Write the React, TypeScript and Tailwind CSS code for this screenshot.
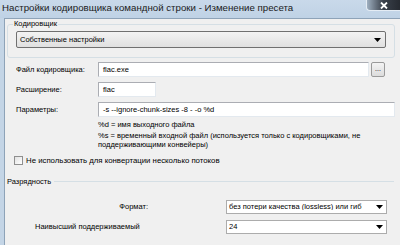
import React from 'react';

const font = { fontFamily: '"Liberation Sans", Arial, sans-serif' };

function Arrow() {
  return (
    <svg width="7" height="4" viewBox="0 0 7 4" className="shrink-0">
      <path d="M0 0h7L3.5 4z" fill="#000" />
    </svg>
  );
}

function TextBox({ value, className }: { value: string; className: string }) {
  return (
    <div
      className={`h-[15px] bg-white border border-[#abadb3] border-r-[#e3e9ef] border-b-[#e3e9ef] pl-[4px] flex items-center text-[7.5px] text-black leading-none ${className}`}
    >
      {value}
    </div>
  );
}

function Combo({ value }: { value: string }) {
  return (
    <div className="h-[14px] w-[161px] bg-white border border-[#acacac] flex items-center text-[7.5px] leading-none text-black">
      <span className="flex-1 pl-[2px] overflow-hidden whitespace-nowrap">{value}</span>
      <span className="w-[14px] h-full flex items-center justify-center">
        <Arrow />
      </span>
    </div>
  );
}

export default function App() {
  return (
    <div className="w-[400px] h-[245px] overflow-hidden bg-[#c4d5e6] flex flex-col" style={font}>
      {/* title bar */}
      <div className="h-[18px] flex items-start relative bg-gradient-to-b from-[#c9d9ea] to-[#bfd2e5]">
        <span className="pl-[2px] pt-[2px] text-[9.7px] leading-[11px] text-[#1a1a1a]">
          Настройки кодировщика командной строки - Изменение пресета
        </span>
        <div className="absolute right-0 top-0 w-[34px] h-[11px] rounded-bl-[4px] border-l border-b border-[#e4ecf4] bg-gradient-to-r from-[#9fb0c1] via-[#3a414b] to-[#262a31] flex items-center justify-center">
          <svg width="8" height="7" viewBox="0 0 8 7">
            <path d="M1 0.5L7 6.5M7 0.5L1 6.5" stroke="#fff" strokeWidth="1.8" />
          </svg>
        </div>
      </div>

      {/* client */}
      <div className="flex-1 ml-[4px] bg-[#f0f0f0] border-l border-t border-[#8ea3b8] text-[7.5px] text-black leading-none">
        <fieldset className="mt-[1px] ml-[2px] w-[387px] h-[38px] border border-[#d5dfe5] rounded-[3px] px-[8px]">
          <legend className="px-[1px] -ml-[3px] text-[7.5px] leading-[8px]">Кодировщик</legend>
          <div className="mt-[3px] h-[17px] w-[370px] rounded-[2px] border border-[#707070] bg-gradient-to-b from-[#f3f3f3] to-[#e0e0e0] flex items-center pl-[3px] pr-[4px]">
            <span className="flex-1">Собственные настройки</span>
            <Arrow />
          </div>
        </fieldset>

        <div className="pl-[11px] mt-[4px] flex flex-col">
          <div className="flex items-center h-[15px]">
            <span className="w-[82px]">Файл кодировщика:</span>
            <TextBox value="flac.exe" className="w-[271px]" />
            <div className="ml-[2px] w-[14px] h-[15px] rounded-[2px] border border-[#9a9a9a] bg-gradient-to-b from-[#f4f4f4] to-[#dcdcdc] flex items-end justify-center pb-[4px] text-[7px] leading-none">
              ...
            </div>
          </div>
          <div className="flex items-center h-[15px] mt-[5px]">
            <span className="w-[82px]">Расширение:</span>
            <TextBox value="flac" className="w-[58px]" />
          </div>
          <div className="flex items-center h-[15px] mt-[5px]">
            <span className="w-[82px]">Параметры:</span>
            <TextBox value="-s --ignore-chunk-sizes -8 - -o %d" className="w-[297px]" />
          </div>
          <div className="pl-[82px] mt-[3px] flex flex-col leading-[9px]">
            <span>%d = имя выходного файла</span>
            <span className="mt-[2px]">%s = временный входной файл (используется только с кодировщиками, не</span>
            <span>поддерживающими конвейеры)</span>
          </div>
          <div className="flex items-center mt-[7px] -ml-[2px]">
            <span className="w-[9px] h-[9px] border border-[#8f8f8f] bg-gradient-to-br from-[#e2e2e2] to-[#ffffff] mr-[3px]" />
            <span className="text-[7.8px]">Не использовать для конвертации несколько потоков</span>
          </div>
        </div>

        <div className="flex items-center ml-[2px] w-[387px] mt-[13px]">
          <span className="pr-[3px]">Разрядность</span>
          <div className="flex-1 h-px bg-[#d5dfe5]" />
        </div>

        <div className="grid grid-cols-[221px_161px] items-center gap-y-[6px] mt-[14px]">
          <span className="pr-[78px] text-right">Формат:</span>
          <Combo value="без потери качества (lossless) или гиб" />
          <span className="pl-[30px]">Наивысший поддерживаемый</span>
          <Combo value="24" />
        </div>
      </div>
    </div>
  );
}
